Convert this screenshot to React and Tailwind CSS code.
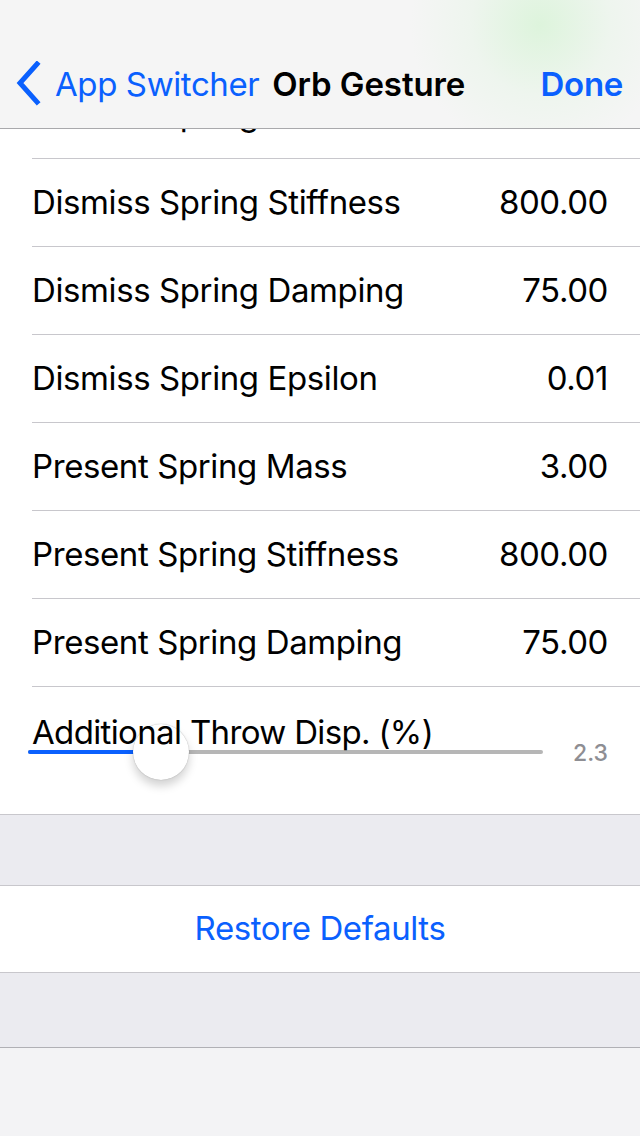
import React from "react";

const rows = [
  ["Dismiss Spring Mass", "3.00"],
  ["Dismiss Spring Stiffness", "800.00"],
  ["Dismiss Spring Damping", "75.00"],
  ["Dismiss Spring Epsilon", "0.01"],
  ["Present Spring Mass", "3.00"],
  ["Present Spring Stiffness", "800.00"],
  ["Present Spring Damping", "75.00"],
];

export default function App() {
  return (
    <div className="relative w-[640px] h-[1136px] overflow-hidden bg-white font-['Inter','Liberation_Sans',sans-serif] text-black">
      {/* scrolled content */}
      <div className="pt-[71px] flex flex-col">
        {rows.map(([label, value]) => (
          <div
            key={label}
            className="ml-8 pr-8 h-[88px] flex items-center justify-between border-b border-[#c8c7cc] text-[33px] tracking-[-0.4px]"
          >
            <span>{label}</span>
            <span>{value}</span>
          </div>
        ))}
        {/* slider row */}
        <div className="h-[128px] border-b border-[#c8c7cc] flex flex-col">
          <div className="relative z-10 ml-8 pt-[25px] text-[33px] leading-[40px] tracking-[-0.65px]">
            Additional Throw Disp. (%)
          </div>
          <div className="flex items-center mt-[-20px]">
            <div className="relative ml-[28px] w-[515px] h-[40px] flex items-center">
              <div className="w-full h-[4px] rounded-full bg-[#b6b6b6] flex">
                <div className="w-[132px] h-full rounded-full bg-[#0a60fe]" />
              </div>
              <div className="absolute left-[105px] top-[-8px] w-[56px] h-[56px] rounded-full bg-white shadow-[0_6px_10px_rgba(0,0,0,0.18),0_0_1px_rgba(0,0,0,0.35)]" />
            </div>
            <div className="ml-auto mr-8 mt-[2px] text-[23px] font-medium text-[#8e8e93]">2.3</div>
          </div>
        </div>
        <div className="h-[71px] bg-[#ebebf0] border-b border-[#c8c7cc]" />
        <div className="h-[87px] bg-white border-b border-[#c8c7cc] flex items-center justify-center text-[33px] text-[#0a60fe] tracking-[-0.4px]">
          Restore Defaults
        </div>
        <div className="h-[75px] bg-[#ebebf0] border-b border-[#b0b0b5]" />
        <div className="h-[100px] bg-[#f3f3f5]" />
      </div>

      {/* navigation bar overlay */}
      <div className="absolute top-0 left-0 w-full h-[129px] border-b border-[#a9a9ac] bg-[radial-gradient(circle_at_540px_25px,#ddf4dc_0px,#eef5ee_70px,#f5f5f5_130px)] flex items-end pb-[19px]">
        <div className="flex items-center w-full">
          <svg width="40" height="46" viewBox="0 0 40 46" className="ml-[12px]">
            <polyline
              points="25,3 8,22 25,41"
              fill="none"
              stroke="#0a60fe"
              strokeWidth="5"
              strokeLinecap="square"
            />
          </svg>
          <span className="ml-[3px] text-[33px] text-[#0a60fe] tracking-[-0.4px]">App Switcher</span>
          <span className="ml-[13px] text-[33px] font-semibold tracking-[-0.1px]">Orb Gesture</span>
          <span className="ml-auto mr-[17px] text-[33px] font-semibold text-[#0a60fe] tracking-[-0.3px]">Done</span>
        </div>
      </div>
    </div>
  );
}
